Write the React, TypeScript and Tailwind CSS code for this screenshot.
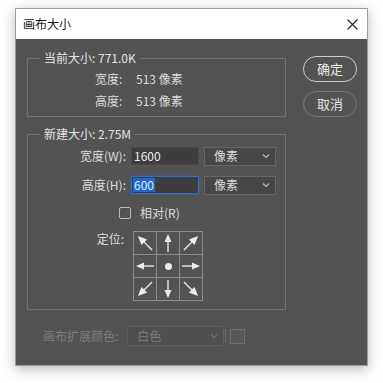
import React from "react";

const font = { fontFamily: '"Noto Sans CJK SC", "Noto Sans", sans-serif' };

function Arrow({ rot }: { rot: number }) {
    const diag = rot % 90 !== 0;
    return (
        <svg width="22" height="22" viewBox="0 0 22 22">
            <g transform={`rotate(${rot} 11 11)`} fill="#ececec" stroke="#ececec">
                <line x1="11" y1={diag ? 21 : 20} x2="11" y2="8" strokeWidth="1.4" />
                <polygon points={diag ? "11,1 7,10 15,10" : "11,2 7.5,10 14.5,10"} stroke="none" />
            </g>
        </svg>
    );
}

function Chevron({ color }: { color: string }) {
    return (
        <svg width="8" height="6" viewBox="0 0 8 6">
            <path d="M1 1.5l3 3 3-3" fill="none" stroke={color} strokeWidth="1.1" />
        </svg>
    );
}

export default function App() {
    const cells: (number | null)[] = [-45, 0, 45, -90, null, 90, -135, 180, 135];

    return (
        <div className="h-[383px] w-[383px] bg-white pl-[15px] pt-[8px]" style={font}>
            <div className="flex h-[358px] w-[353px] flex-col border border-[#9c9c9c] bg-[#535353] shadow-[0_3px_12px_rgba(0,0,0,0.28)]">
                {/* Title bar */}
                <div className="flex h-[30px] items-center justify-between bg-white pl-[7px] pr-[9px]">
                    <span className="text-[12px] text-[#1a1a1a]">画布大小</span>
                    <svg width="11" height="11" viewBox="0 0 11 11">
                        <path d="M0.5 0.5l10 10M10.5 0.5l-10 10" stroke="#222" strokeWidth="1.1" />
                    </svg>
                </div>

                <div className="flex flex-1 flex-col pl-[11px] pt-[11px]">
                    <div className="flex">
                        <div className="flex w-[259px] flex-col">
                            {/* Current size */}
                            <fieldset className="border border-[#727272] pb-[4px] pt-[2px]">
                                <legend className="ml-[12px] px-[4px] text-[12px] leading-[16px] text-[#e4e4e4]">
                                    当前大小: 771.0K
                                </legend>
                                <div className="flex h-[22px] items-center pl-[67px] text-[12px] text-[#dcdcdc]">
                                    <span className="w-[41px]">宽度:</span>
                                    <span>513 像素</span>
                                </div>
                                <div className="flex h-[22px] items-center pl-[67px] text-[12px] text-[#dcdcdc]">
                                    <span className="w-[41px]">高度:</span>
                                    <span>513 像素</span>
                                </div>
                            </fieldset>

                            {/* New size */}
                            <fieldset className="mt-[9px] border border-[#727272] pb-[8px] pt-[5px]">
                                <legend className="ml-[12px] px-[4px] text-[12px] leading-[16px] text-[#e4e4e4]">
                                    新建大小: 2.75M
                                </legend>
                                <div className="flex h-[18px] items-center text-[12px] text-[#dcdcdc]">
                                    <span className="w-[98px] text-right">宽度(W):</span>
                                    <div className="ml-[5px] flex h-[18px] w-[68px] items-center border border-[#4a4a4a] bg-[#3d3d3d] pl-[2px] text-[#f0f0f0]">
                                        1600
                                    </div>
                                    <div className="ml-[5px] flex h-[19px] w-[72px] items-center justify-between border border-[#666] bg-[#474747] pl-[9px] pr-[5px]">
                                        <span>像素</span>
                                        <Chevron color="#bdbdbd" />
                                    </div>
                                </div>
                                <div className="mt-[11px] flex h-[18px] items-center text-[12px] text-[#dcdcdc]">
                                    <span className="w-[98px] text-right">高度(H):</span>
                                    <div className="ml-[5px] flex h-[18px] w-[68px] items-center border border-[#2f6fc4] bg-[#3d3d3d] pl-[1px] shadow-[0_0_2px_#2b6bd0]">
                                        <span className="bg-[#2566c9] px-px leading-[14px] text-[#d8f0ff]">600</span>
                                    </div>
                                    <div className="ml-[5px] flex h-[19px] w-[72px] items-center justify-between border border-[#666] bg-[#474747] pl-[9px] pr-[5px]">
                                        <span>像素</span>
                                        <Chevron color="#bdbdbd" />
                                    </div>
                                </div>
                                <div className="mt-[8px] flex h-[22px] items-center pl-[91px] text-[12px] text-[#dcdcdc]">
                                    <span className="h-[12px] w-[12px] rounded-[2px] border border-[#bcbcbc]" />
                                    <span className="ml-[9px]">相对(R)</span>
                                </div>
                                <div className="mt-[7px] flex">
                                    <span className="w-[96px] text-right text-[12px] leading-[16px] text-[#dcdcdc]">定位:</span>
                                    <div className="ml-[9px] grid grid-cols-[repeat(3,22px)] gap-px border border-[#8c8c8c] bg-[#8c8c8c]">
                                        {cells.map((rot, i) => (
                                            <div key={i} className="flex h-[22px] w-[22px] items-center justify-center bg-[#535353]">
                                                {rot === null ? (
                                                    <span className="h-[7px] w-[7px] rounded-full bg-[#ececec]" />
                                                ) : (
                                                    <Arrow rot={rot} />
                                                )}
                                            </div>
                                        ))}
                                    </div>
                                </div>
                            </fieldset>
                        </div>

                        {/* Buttons */}
                        <div className="ml-[17px] flex flex-col pt-[6px]">
                            <button className="flex h-[26px] w-[54px] items-center justify-center rounded-full border-[1.5px] border-[#cfcfcf] text-[13px] text-[#ececec]">
                                确定
                            </button>
                            <button className="mt-[9px] flex h-[26px] w-[54px] items-center justify-center rounded-full border-[1.5px] border-[#787878] text-[13px] text-[#e4e4e4]">
                                取消
                            </button>
                        </div>
                    </div>

                    {/* Canvas extension color */}
                    <div className="mt-[16px] flex items-center pl-[16px] text-[12px] text-[#7c7c7c]">
                        <span>画布扩展颜色:</span>
                        <div className="ml-[9px] flex h-[20px] w-[97px] items-center justify-between border border-[#5e5e5e] bg-[#4f4f4f] pl-[9px] pr-[5px]">
                            <span>白色</span>
                            <Chevron color="#707070" />
                        </div>
                        <span className="ml-px h-[14px] w-px bg-[#6a6a6a]" />
                        <span className="ml-[4px] h-[15px] w-[15px] border border-[#6e6e6e] bg-[#575757]" />
                    </div>
                </div>
            </div>
        </div>
    );
}
